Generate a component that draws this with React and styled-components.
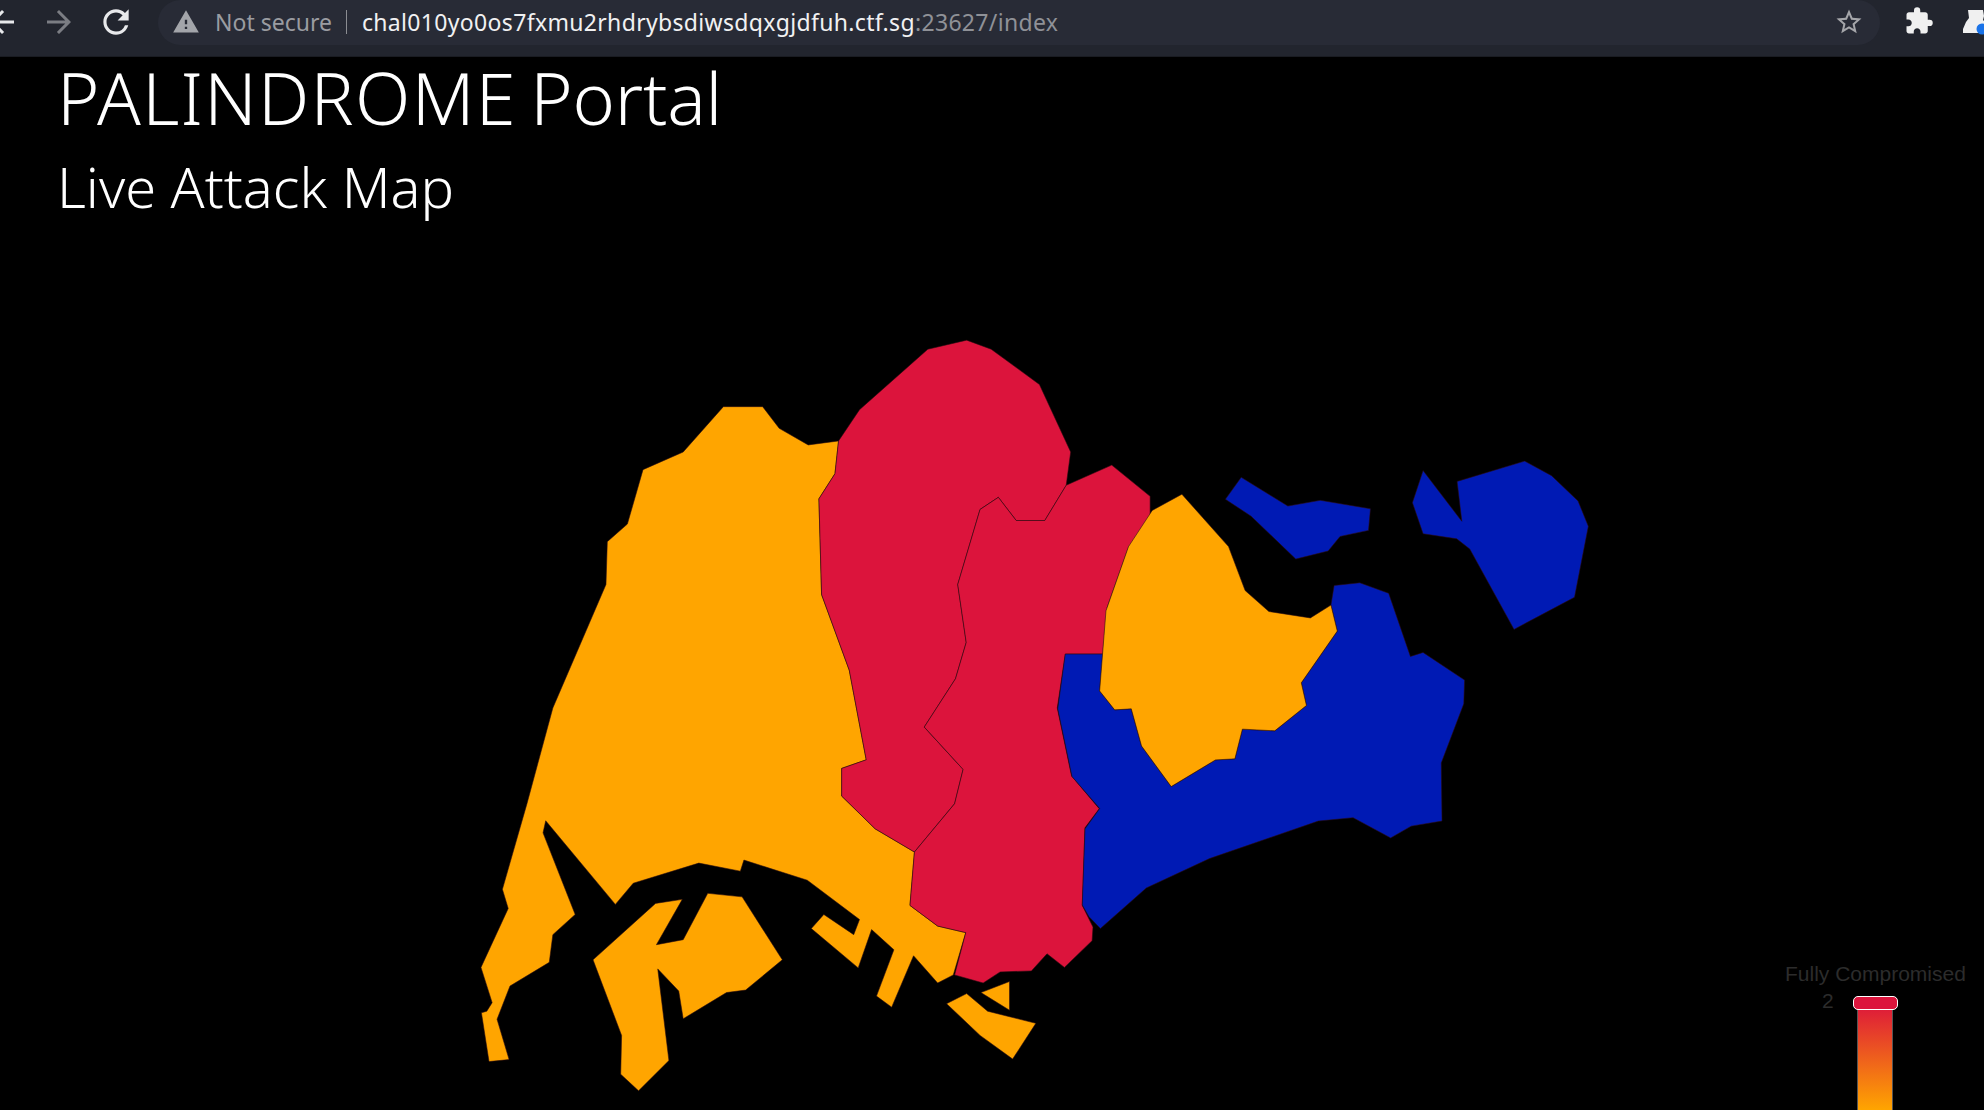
import React from "react";
import styled, { createGlobalStyle } from "styled-components";
import {
  MdArrowBack,
  MdArrowForward,
  MdRefresh,
  MdWarning,
  MdStarBorder,
  MdExtension
} from "react-icons/md";

const GlobalStyle = createGlobalStyle`
  html, body {
    margin: 0;
    height: 100%;
    background: #000;
    overflow: hidden;
  }
`;

const Page = styled.div`
  position: relative;
  height: 1110px;
  overflow: hidden;
  background: #000;
  display: flex;
  flex-direction: column;
`;

const Toolbar = styled.div`
  height: 56px;
  flex: none;
  display: flex;
  align-items: flex-start;
  background: #22252e;
  border-bottom: 1px solid #1a1c22;
`;

const NavButton = styled.div`
  width: ${props => props.$width}px;
  height: 43px;
  flex: none;
  display: flex;
  align-items: center;
  justify-content: center;
  font-size: ${props => props.$size}px;
  color: ${props => (props.$disabled ? "#7b7d83" : "#e8e9eb")};
`;

const Omnibox = styled.div`
  flex: none;
  width: 1722px;
  height: 45px;
  margin-left: 20px;
  padding: 0 0 2px 14px;
  box-sizing: border-box;
  display: flex;
  align-items: center;
  background: #282b36;
  border-radius: 23px;
  font-family: "Noto Sans", sans-serif;
  font-size: 23px;
`;

const WarnIcon = styled(MdWarning)`
  font-size: 28px;
  color: #a3a5aa;
  flex: none;
`;

const Insecure = styled.span`
  margin-left: 15px;
  color: #9a9ca1;
`;

const Separator = styled.span`
  width: 1px;
  height: 24px;
  margin: 0 15px 0 14px;
  background: #8b8d92;
`;

const Host = styled.span`
  color: #f1f1f2;
  letter-spacing: 0.33px;
`;

const PortPath = styled.span`
  color: #8f9197;
  letter-spacing: 0.33px;
`;

const StarIcon = styled(MdStarBorder)`
  margin-left: auto;
  margin-right: 16px;
  font-size: 30px;
  color: #a5a6aa;
`;

const ExtensionIcon = styled(MdExtension)`
  flex: none;
  margin: 6px 0 0 24px;
  font-size: 30px;
  color: #f0f0f0;
`;

const ProfileIcon = styled.svg`
  flex: none;
  width: 24px;
  height: 26px;
  margin: 9px 0 0 29px;
`;

const Header = styled.header`
  flex: none;
  height: 278px;
  padding-left: 57px;
  color: #fff;
  font-family: "Noto Sans", sans-serif;
  font-weight: 300;
`;

const Title = styled.h1`
  margin: 0;
  font-size: 72px;
  line-height: 80px;
  font-weight: 300;
  letter-spacing: 1.3px;
  word-spacing: -6.6px;
`;

const TitleTail = styled.span`
  letter-spacing: -0.2px;
`;

const Subtitle = styled.h2`
  margin: 8px 0 0;
  font-size: 56px;
  line-height: 82px;
  font-weight: 300;
`;

const MapSvg = styled.svg`
  display: block;
  flex: none;
  width: 1140px;
  height: 775px;
  margin-left: 470px;
`;

const Legend = styled.div`
  position: absolute;
  right: 0;
  bottom: 0;
  width: 199px;
  height: 148px;
  font-family: "Liberation Sans", Arial, sans-serif;
  font-size: 21px;
  color: #2c2c2c;
`;

const LegendTitle = styled.div`
  position: absolute;
  left: 0;
  top: 0;
  line-height: 24px;
  white-space: nowrap;
`;

const LegendValue = styled.div`
  position: absolute;
  left: 37px;
  top: 27px;
  line-height: 24px;
`;

const ColorBar = styled.div`
  position: absolute;
  left: 72px;
  top: 40px;
  bottom: 0;
  width: 36px;
  box-sizing: border-box;
  border: 1px solid #555;
  border-width: 0 1px;
  background: linear-gradient(#dc143c, #ffa500);
`;

const BarHandle = styled.div`
  position: absolute;
  left: 68px;
  top: 34px;
  width: 45px;
  height: 14px;
  box-sizing: border-box;
  background: #dc143c;
  border: 1.5px solid #fff;
  border-radius: 5px;
`;

const CRIMSON = "#dc143c";
const ORANGE = "#ffa500";
const BLUE = "#001ab4";

// outlines traced from the reference, in crop coordinates
const WEST_CROP = "translate(460 320) scale(0.4464 0.5038)";
const EAST_CROP = "translate(1000 430) scale(0.3954 0.338)";

const westShapes = [
  {
    fill: ORANGE,
    points:
      "848,240 780,248 715,215 678,172 590,172 500,262 410,297 375,405 330,440 327,525 208,770 150,960 95,1130 108,1168 47,1285 72,1355 60,1372 48,1375 65,1472 110,1468 83,1388 112,1322 200,1275 208,1220 258,1180 186,1018 192,994 348,1160 388,1118 535,1078 628,1094 636,1072 778,1112 895,1190 882,1220 815,1180 787,1208 892,1286 922,1210 972,1250 933,1342 967,1364 1016,1262 1070,1316 1105,1300 1133,1216 1070,1203 1008,1162 1018,1056 930,1010 855,945 855,890 910,873 872,695 810,545 804,355 840,305"
  },
  {
    fill: ORANGE,
    points:
      "298,1270 438,1158 498,1150 440,1240 500,1230 555,1138 632,1145 722,1270 640,1330 597,1335 500,1387 490,1332 443,1288 468,1470 400,1530 360,1497 362,1420"
  },
  { fill: ORANGE, points: "1167,1335 1231,1313 1231,1370" },
  {
    fill: ORANGE,
    points: "1090,1357 1135,1337 1182,1372 1290,1396 1238,1467 1165,1420"
  },
  {
    fill: CRIMSON,
    points:
      "848,240 895,178 1048,58 1135,40 1190,58 1298,128 1368,262 1358,328 1310,398 1246,398 1206,352 1165,376 1115,525 1134,640 1110,712 1040,808 1127,892 1108,960 1018,1056 930,1010 855,945 855,890 910,873 872,695 810,545 804,355 840,305"
  },
  {
    fill: CRIMSON,
    points:
      "1358,328 1460,288 1546,350 1546,400 1498,450 1450,570 1440,663 1356,663 1338,770 1370,905 1432,970 1400,1008 1394,1162 1418,1205 1416,1232 1354,1285 1315,1258 1280,1292 1210,1294 1172,1316 1108,1300 1133,1216 1070,1203 1008,1162 1018,1056 1108,960 1127,892 1040,808 1110,712 1134,640 1115,525 1165,376 1206,352 1246,398 1310,398"
  }
];

const eastShapes = [
  {
    fill: BLUE,
    points:
      "165,663 260,663 252,772 290,828 332,825 358,935 433,1055 545,976 594,973 613,885 695,890 775,815 762,748 853,595 837,518 845,460 910,452 983,483 1038,670 1070,658 1175,740 1173,810 1116,985 1118,1157 1040,1172 988,1207 893,1147 805,1157 530,1268 370,1355 254,1475 225,1440 208,1405 215,1180 252,1120 182,1025 146,825"
  },
  {
    fill: BLUE,
    points:
      "610,140 728,225 810,208 937,233 932,297 860,315 830,358 748,382 635,255 570,205"
  },
  {
    fill: BLUE,
    points:
      "1070,120 1168,270 1156,152 1327,92 1395,135 1462,210 1488,285 1453,495 1300,590 1188,352 1155,322 1070,307 1043,215"
  },
  {
    fill: ORANGE,
    points:
      "460,190 578,345 620,475 680,537 785,556 837,518 853,595 762,748 775,815 695,890 613,885 594,973 545,976 433,1055 358,935 332,825 290,828 252,772 268,535 325,345 385,238"
  }
];

const Region = ({ fill, points }) => (
  <polygon
    points={points}
    fill={fill}
    stroke="#2a0a10"
    strokeWidth="0.7"
    strokeOpacity="0.8"
    strokeLinejoin="round"
    vectorEffect="non-scaling-stroke"
  />
);

const App = () => {
  return (
    <Page>
      <GlobalStyle />
      <Toolbar>
        <NavButton $width={24} $size={36}>
          <MdArrowBack style={{ marginLeft: -20 }} />
        </NavButton>
        <NavButton $width={70} $size={36} $disabled>
          <MdArrowForward />
        </NavButton>
        <NavButton $width={44} $size={38}>
          <MdRefresh />
        </NavButton>
        <Omnibox>
          <WarnIcon />
          <Insecure>Not secure</Insecure>
          <Separator />
          <Host>chal010yo0os7fxmu2rhdrybsdiwsdqxgjdfuh.ctf.sg</Host>
          <PortPath>:23627/index</PortPath>
          <StarIcon />
        </Omnibox>
        <ExtensionIcon />
        <ProfileIcon viewBox="0 0 24 26">
          <path d="M5 1h15l1 6-1 4 2 2v11H0v-4l3-7 3-4z" fill="#f0f0f0" />
          <circle cx="19" cy="20" r="5.5" fill="#1a73e8" />
        </ProfileIcon>
      </Toolbar>
      <Header>
        <Title>
          PALINDROME <TitleTail>Portal</TitleTail>
        </Title>
        <Subtitle>Live Attack Map</Subtitle>
      </Header>
      <MapSvg viewBox="470 335 1140 775">
        <g transform={WEST_CROP}>
          {westShapes.map(shape => (
            <Region key={shape.points} {...shape} />
          ))}
        </g>
        <g transform={EAST_CROP}>
          {eastShapes.map(shape => (
            <Region key={shape.points} {...shape} />
          ))}
        </g>
      </MapSvg>
      <Legend>
        <LegendTitle>Fully Compromised</LegendTitle>
        <LegendValue>2</LegendValue>
        <ColorBar />
        <BarHandle />
      </Legend>
    </Page>
  );
};

export default App;
